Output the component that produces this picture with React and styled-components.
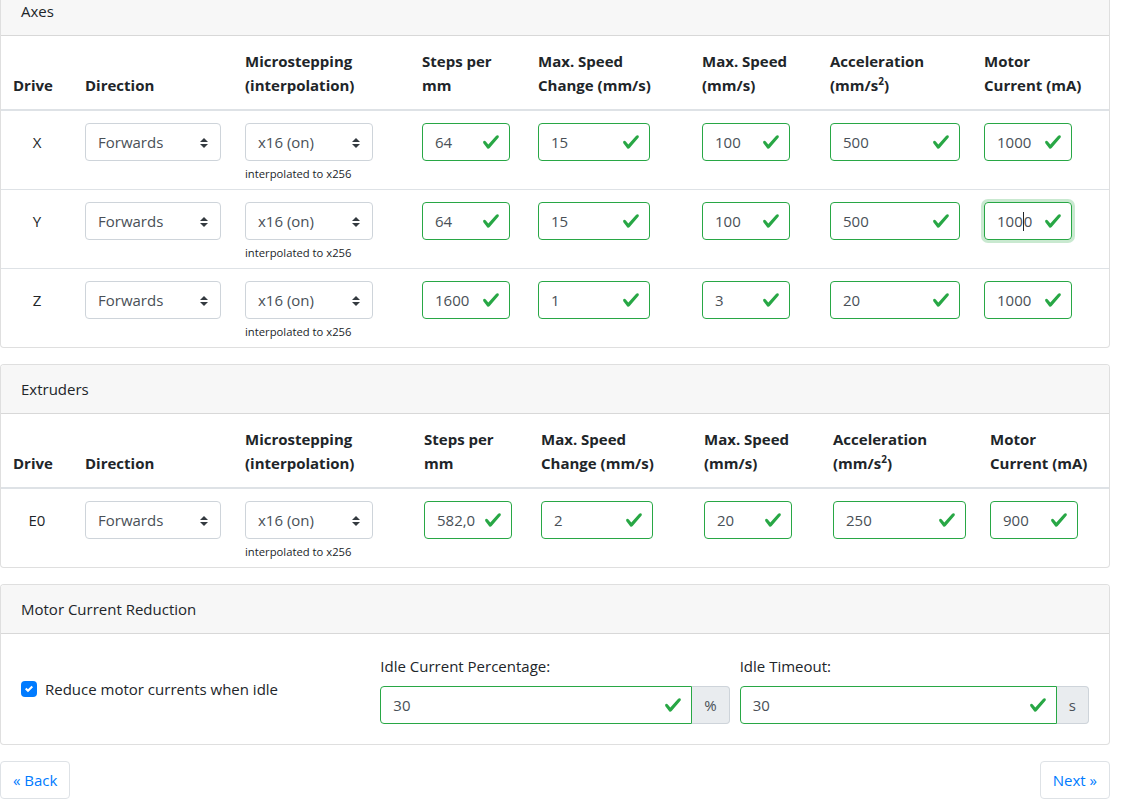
import React from "react";
import styled, { createGlobalStyle, css } from "styled-components";

const GlobalStyle = createGlobalStyle`
  body {
    margin: 0;
    background: #fff;
    color: #212529;
    font-family: "Open Sans", "Noto Sans", sans-serif;
    font-size: 15px;
    line-height: 24px;
  }
`;

const Page = styled.div`
  width: 1110px;
  margin-top: -14px;
`;

const Card = styled.div`
  border: 1px solid rgba(0, 0, 0, 0.125);
  border-radius: 4px;
  background: #fff;
  margin-bottom: 16px;
  overflow: hidden;
`;

const CardHeader = styled.div`
  padding: 12px 20px;
  background: #f7f7f7;
  border-bottom: 1px solid rgba(0, 0, 0, 0.125);
`;

const Row = styled.div`
  display: grid;
  grid-template-columns: ${(p) => p.cols};
  border-bottom: ${(p) => (p.head ? "2px" : "1px")} solid #dee2e6;
  &:last-child {
    border-bottom: none;
  }
`;

const HeadCell = styled.div`
  padding: 13px 12px 12px;
  font-weight: 700;
  align-self: end;
  white-space: nowrap;
`;

const Cell = styled.div`
  padding: 12px 12px 7px;
`;

const DriveCell = styled(Cell)`
  padding-top: 19px;
  text-align: center;
`;

const Select = styled.div`
  box-sizing: border-box;
  width: ${(p) => p.w}px;
  height: 38px;
  padding: 6px 32px 6px 12px;
  border: 1px solid #ced4da;
  border-radius: 4px;
  color: #495057;
  position: relative;
  svg {
    position: absolute;
    right: 12px;
    top: 14px;
  }
`;

const Hint = styled.small`
  display: block;
  margin-top: 5px;
  font-size: 11.25px;
  line-height: 16px;
  color: #212529;
`;

const Field = styled.div`
  box-sizing: border-box;
  width: ${(p) => (p.w ? `${p.w}px` : "auto")};
  height: 38px;
  padding: 6px 36px 6px 12px;
  border: 1px solid #28a745;
  border-radius: ${(p) => (p.grouped ? "4px 0 0 4px" : "4px")};
  color: #495057;
  position: relative;
  flex: ${(p) => (p.grouped ? 1 : "none")};
  ${(p) =>
    p.focused &&
    css`
      box-shadow: 0 0 0 3px rgba(40, 167, 69, 0.25);
    `}
  svg {
    position: absolute;
    right: 9px;
    top: 9px;
  }
`;

const Caret = styled.span`
  display: inline-block;
  width: 1px;
  height: 19px;
  background: #212529;
  vertical-align: -4px;
`;

const Check = () => (
  <svg width="18" height="18" viewBox="0 0 8 8">
    <path
      fill="#28a745"
      d="M2.3 6.73L.6 4.53c-.4-1.04.46-1.4 1.1-.8l1.1 1.4 3.4-3.8c.6-.63 1.6-.27 1.2.7l-4 4.6c-.43.5-.8.4-1.1.1z"
    />
  </svg>
);

const Arrows = () => (
  <svg width="8" height="10" viewBox="0 0 4 5">
    <path fill="#343a40" d="M2 0L0 2h4zm0 5L0 3h4z" />
  </svg>
);

const FormRow = styled.div`
  display: grid;
  grid-template-columns: repeat(3, 1fr);
  column-gap: 10px;
  align-items: center;
  padding: 20px;
`;

const Checkline = styled.label`
  display: flex;
  align-items: center;
  gap: 8px;
`;

const Box = styled.span`
  width: 16px;
  height: 16px;
  border-radius: 4px;
  background: #007bff;
  display: flex;
  align-items: center;
  justify-content: center;
`;

const Label = styled.div`
  margin-bottom: 8px;
`;

const InputGroup = styled.div`
  display: flex;
`;

const Addon = styled.div`
  box-sizing: border-box;
  height: 38px;
  padding: 6px 12px;
  background: #e9ecef;
  border: 1px solid #ced4da;
  border-left: none;
  border-radius: 0 4px 4px 0;
  color: #495057;
`;

const Footer = styled.div`
  display: flex;
  justify-content: space-between;
`;

const NavButton = styled.button`
  font: inherit;
  height: 38px;
  padding: 6px 12px;
  background: #fff;
  color: #007bff;
  border: 1px solid #dee2e6;
  border-radius: 4px;
`;

const headers = [
  "Drive",
  "Direction",
  ["Microstepping", "(interpolation)"],
  ["Steps per", "mm"],
  ["Max. Speed", "Change (mm/s)"],
  ["Max. Speed", "(mm/s)"],
  [
    "Acceleration",
    <>
      (mm/s<sup style={{ fontSize: "10px", lineHeight: 0 }}>2</sup>)
    </>,
  ],
  ["Motor", "Current (mA)"],
];

const axes = [
  { drive: "X", values: ["64", "15", "100", "500", "1000"] },
  { drive: "Y", values: ["64", "15", "100", "500", "1000"], focus: 4 },
  { drive: "Z", values: ["1600", "1", "3", "20", "1000"] },
];

const extruders = [{ drive: "E0", values: ["582,0", "2", "20", "250", "900"] }];

function DriveTable({ cols, microWidth, fieldWidths, rows }) {
  return (
    <>
      <Row head cols={cols}>
        {headers.map((h, i) => (
          <HeadCell key={i}>
            {Array.isArray(h) ? (
              <>
                {h[0]}
                <br />
                {h[1]}
              </>
            ) : (
              h
            )}
          </HeadCell>
        ))}
      </Row>
      {rows.map((r) => (
        <Row key={r.drive} cols={cols}>
          <DriveCell>{r.drive}</DriveCell>
          <Cell>
            <Select w={136}>
              Forwards
              <Arrows />
            </Select>
          </Cell>
          <Cell>
            <Select w={microWidth}>
              x16 (on)
              <Arrows />
            </Select>
            <Hint>interpolated to x256</Hint>
          </Cell>
          {r.values.map((v, i) => (
            <Cell key={i}>
              <Field w={fieldWidths[i]} focused={r.focus === i}>
                {r.focus === i ? (
                  <>
                    {v.slice(0, 3)}
                    <Caret />
                    {v.slice(3)}
                  </>
                ) : (
                  v
                )}
                <Check />
              </Field>
            </Cell>
          ))}
        </Row>
      ))}
    </>
  );
}

export default function App() {
  return (
    <>
      <GlobalStyle />
      <Page>
        <Card>
          <CardHeader>Axes</CardHeader>
          <DriveTable
            cols="72px 160px 177px 116px 164px 128px 154px 137px"
            microWidth={128}
            fieldWidths={[88, 112, 88, 130, 88]}
            rows={axes}
          />
        </Card>
        <Card>
          <CardHeader>Extruders</CardHeader>
          <DriveTable
            cols="72px 160px 179px 117px 163px 129px 157px 131px"
            microWidth={128}
            fieldWidths={[88, 112, 88, 133, 88]}
            rows={extruders}
          />
        </Card>
        <Card>
          <CardHeader>Motor Current Reduction</CardHeader>
          <FormRow>
            <Checkline>
              <Box>
                <svg width="8" height="8" viewBox="0 0 8 8">
                  <path
                    fill="#fff"
                    d="M6.564.75l-3.59 3.612-1.538-1.55L0 4.26l2.974 2.99L8 2.193z"
                  />
                </svg>
              </Box>
              Reduce motor currents when idle
            </Checkline>
            <div>
              <Label>Idle Current Percentage:</Label>
              <InputGroup>
                <Field grouped>
                  30
                  <Check />
                </Field>
                <Addon>%</Addon>
              </InputGroup>
            </div>
            <div>
              <Label>Idle Timeout:</Label>
              <InputGroup>
                <Field grouped>
                  30
                  <Check />
                </Field>
                <Addon>s</Addon>
              </InputGroup>
            </div>
          </FormRow>
        </Card>
        <Footer>
          <NavButton>« Back</NavButton>
          <NavButton>Next »</NavButton>
        </Footer>
      </Page>
    </>
  );
}
